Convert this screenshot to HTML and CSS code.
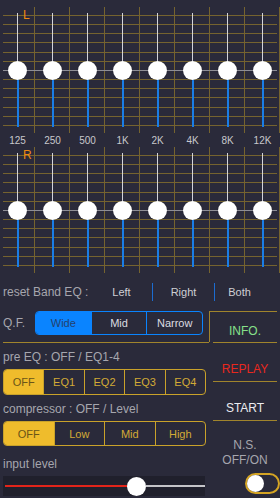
FILE: index.html
```html
<!DOCTYPE html>
<html lang="en">
<head>
    <meta charset="UTF-8">
    <meta name="viewport" content="width=device-width, initial-scale=1.0">
    <title>Band EQ</title>
    <link rel="stylesheet" href="styles.css">
</head>
<body>
    <div class="top">
        <div class="eq">
            <div class="hlines"><i></i><i></i><i></i><i></i><i></i><i></i><i class="mid"></i><i></i><i></i><i></i><i></i><i></i><i></i></div>
            <div class="bands">
                <div class="band"><span class="up"></span><span class="knob"></span><span class="down"></span></div>
                <div class="band"><span class="up"></span><span class="knob"></span><span class="down"></span></div>
                <div class="band"><span class="up"></span><span class="knob"></span><span class="down"></span></div>
                <div class="band"><span class="up"></span><span class="knob"></span><span class="down"></span></div>
                <div class="band"><span class="up"></span><span class="knob"></span><span class="down"></span></div>
                <div class="band"><span class="up"></span><span class="knob"></span><span class="down"></span></div>
                <div class="band"><span class="up"></span><span class="knob"></span><span class="down"></span></div>
                <div class="band"><span class="up"></span><span class="knob"></span><span class="down"></span></div>
            </div>
            <span class="ch">L</span>
        </div>
        <div class="freqs">
            <span>125</span><span>250</span><span>500</span><span>1K</span><span>2K</span><span>4K</span><span>8K</span><span>12K</span>
        </div>
        <div class="eq">
            <div class="hlines"><i></i><i></i><i></i><i></i><i></i><i></i><i class="mid"></i><i></i><i></i><i></i><i></i><i></i><i></i></div>
            <div class="bands">
                <div class="band"><span class="up"></span><span class="knob"></span><span class="down"></span></div>
                <div class="band"><span class="up"></span><span class="knob"></span><span class="down"></span></div>
                <div class="band"><span class="up"></span><span class="knob"></span><span class="down"></span></div>
                <div class="band"><span class="up"></span><span class="knob"></span><span class="down"></span></div>
                <div class="band"><span class="up"></span><span class="knob"></span><span class="down"></span></div>
                <div class="band"><span class="up"></span><span class="knob"></span><span class="down"></span></div>
                <div class="band"><span class="up"></span><span class="knob"></span><span class="down"></span></div>
                <div class="band"><span class="up"></span><span class="knob"></span><span class="down"></span></div>
            </div>
            <span class="ch">R</span>
        </div>
    </div>

    <div class="reset">
        <span class="reset-label">reset Band EQ :</span>
        <span class="reset-btn left">Left</span>
        <span class="reset-btn right">Right</span>
        <span class="reset-btn both">Both</span>
    </div>

    <div class="controls">
        <div class="left-col">
            <div class="qf">
                <span class="qf-label">Q.F.</span>
                <div class="seg blue">
                    <span class="on">Wide</span><span>Mid</span><span>Narrow</span>
                </div>
            </div>
            <div class="label">pre EQ : OFF / EQ1-4</div>
            <div class="seg gold pre">
                <span class="on">OFF</span><span>EQ1</span><span>EQ2</span><span>EQ3</span><span>EQ4</span>
            </div>
            <div class="label">compressor : OFF / Level</div>
            <div class="seg gold comp">
                <span class="on">OFF</span><span>Low</span><span>Mid</span><span>High</span>
            </div>
            <div class="label input">input level</div>
            <div class="slider">
                <span class="fill"></span><span class="thumb"></span><span class="rest"></span>
            </div>
        </div>
        <div class="right-col">
            <div class="info">INFO.</div>
            <div class="rule"></div>
            <div class="action replay">REPLAY</div>
            <div class="rule"></div>
            <div class="action start">START</div>
            <div class="rule"></div>
            <div class="ns">N.S.<br>OFF/ON</div>
            <div class="toggle"><span></span></div>
        </div>
    </div>
</body>
</html>
```

FILE: styles.css
```css
body {
    margin: 0;
    width: 280px;
    height: 498px;
    overflow: hidden;
    background-color: #2a2a3a;
    font-family: "Liberation Sans", Arial, sans-serif;
    color: #a6a6ae;
}

.top {
    padding-top: 7px;
}

/* EQ panel: gold grid behind the band sliders */
.eq {
    display: grid;
    height: 126px;
    background-image: repeating-linear-gradient(90deg, transparent 0 34px, #75632f 34px 35px);
}

.eq > * {
    grid-area: 1 / 1;
}

.hlines {
    margin: 8px 3px 7px;
    display: flex;
    flex-direction: column;
    justify-content: space-between;
}

.hlines i {
    display: block;
    height: 1px;
    background-color: #75632f;
}

.hlines i.mid {
    background-color: #8e8e96;
}

.bands {
    display: flex;
}

.band {
    width: 35px;
    display: flex;
    flex-direction: column;
    align-items: center;
    padding-top: 6px;
}

.up {
    width: 1.5px;
    height: 57px;
    background-color: #d4d4d8;
}

.down {
    width: 2px;
    height: 57px;
    background-color: #1a7de6;
}

.knob {
    width: 19px;
    height: 19px;
    margin: -9.5px 0;
    border-radius: 50%;
    background-color: #fff;
    box-shadow: 0 0 1px rgba(0, 0, 0, 0.5);
    position: relative;
    z-index: 1;
}

.ch {
    justify-self: start;
    align-self: start;
    margin: 2px 0 0 23px;
    font-size: 12px;
    line-height: 12px;
    color: #f08a10;
}

.freqs {
    display: flex;
    height: 14px;
}

.freqs span {
    width: 35px;
    text-align: center;
    font-size: 10px;
    line-height: 15px;
    color: #c8c8cc;
}

/* reset row */
.reset {
    display: flex;
    align-items: center;
    height: 18px;
    margin-top: 10px;
    font-size: 12px;
}

.reset-label {
    width: 88px;
    padding-left: 3px;
}

.reset-btn {
    color: #cfcfd4;
    font-size: 11px;
    text-align: center;
    height: 18px;
    line-height: 18px;
}

.left {
    width: 61px;
}

.right {
    width: 61px;
    border-left: 1px solid #1c6cd0;
}

.both {
    width: 49px;
    border-left: 1px solid #1c6cd0;
}

/* lower controls */
.controls {
    display: flex;
    margin-top: 10px;
}

.left-col {
    width: 206px;
    margin-left: 3px;
}

.right-col {
    width: 68px;
}

.qf {
    display: flex;
    align-items: center;
    height: 24px;
    padding-bottom: 7px;
    border-bottom: 1px solid #a0842c;
}

.qf-label {
    width: 32px;
    font-size: 12px;
}

.label {
    font-size: 12px;
    line-height: 16px;
    margin-top: 6px;
}

.label.input {
    margin-top: 10px;
}

.seg {
    display: flex;
    border: 1px solid;
    border-radius: 4px;
    overflow: hidden;
    font-size: 11px;
}

.seg span {
    flex: 1;
    display: flex;
    align-items: center;
    justify-content: center;
    border-left: 1px solid;
}

.seg span:first-child {
    border-left: none;
}

.seg.blue {
    width: 166px;
    height: 22px;
    border-color: #0a84ff;
    color: #dcdce0;
}

.seg.blue span {
    border-color: #0a84ff;
}

.seg.blue .on {
    background-color: #0a84ff;
    color: #24406c;
}

.seg.gold {
    width: 201px;
    border-color: #c9a22a;
    color: #d2aa36;
    margin-top: 4px;
}

.seg.gold span {
    border-color: #c9a22a;
}

.seg.gold .on {
    background-color: #efbc2c;
    color: #6a5418;
}

.seg.pre {
    height: 24px;
}

.seg.comp {
    height: 23px;
}

.slider {
    display: flex;
    align-items: center;
    width: 200px;
    height: 20px;
    margin-top: 4px;
    padding-left: 2px;
    background-color: #20202c;
}

.fill {
    width: 122px;
    height: 2px;
    background-color: #e2241a;
}

.thumb {
    width: 19px;
    height: 19px;
    border-radius: 50%;
    background-color: #fff;
    flex-shrink: 0;
}

.rest {
    flex: 1;
    height: 1.5px;
    background-color: #c4c4c8;
}

/* right column buttons */
.info {
    height: 18px;
    padding-top: 12px;
    border-top: 1px solid #a0842c;
    border-left: 1px solid #a0842c;
    text-align: center;
    padding-left: 3px;
    font-size: 12px;
    line-height: 14px;
    color: #86e08a;
}

.rule {
    margin-left: 4px;
    height: 1px;
    background-color: #a0842c;
}

.action {
    margin-top: 18px;
    margin-bottom: 4px;
    padding-left: 4px;
    text-align: center;
    font-size: 12px;
    line-height: 16px;
}

.replay {
    color: #e8281e;
}

.start {
    color: #ececf0;
}

.ns {
    margin-top: 17px;
    padding-left: 4px;
    text-align: center;
    font-size: 12px;
    line-height: 15px;
}

.toggle {
    box-sizing: border-box;
    width: 35px;
    height: 21px;
    margin: 5px 0 0 36px;
    border: 2px solid #d4a424;
    border-radius: 11px;
}

.toggle span {
    display: block;
    width: 17px;
    height: 17px;
    border-radius: 50%;
    background-color: #fff;
}
```
